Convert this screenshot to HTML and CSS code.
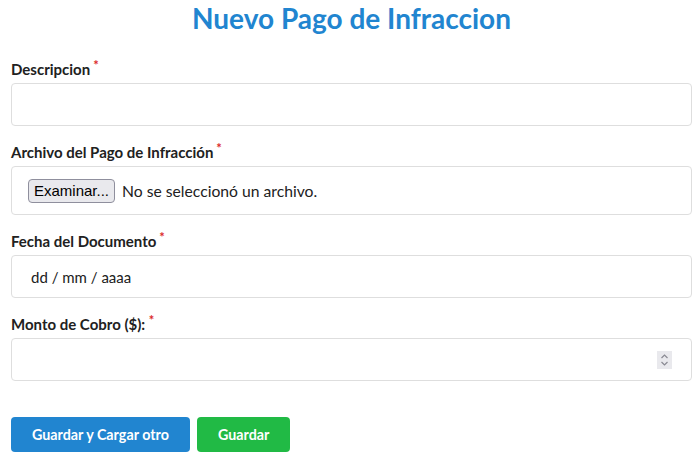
FILE: index.html
```html
<!DOCTYPE html>
<html lang="es">
<head>
<meta charset="utf-8">
<title>Nuevo Pago de Infraccion</title>
<link rel="stylesheet" href="styles.css">
</head>
<body>
<div class="page">
  <h1 class="title">Nuevo Pago de Infraccion</h1>
  <form class="form">
    <div class="field">
      <label class="label">Descripcion<span class="req">*</span></label>
      <input class="control" type="text">
    </div>
    <div class="field">
      <label class="label">Archivo del Pago de Infracción<span class="req">*</span></label>
      <div class="control file-control">
        <span class="file-btn">Examinar...</span>
        <span class="file-text">No se seleccionó un archivo.</span>
      </div>
    </div>
    <div class="field">
      <label class="label">Fecha del Documento<span class="req">*</span></label>
      <div class="control date-control">dd / mm / aaaa</div>
    </div>
    <div class="field">
      <label class="label">Monto de Cobro ($): <span class="req req-tight">*</span></label>
      <div class="control number-control">
        <input class="number-input" type="text">
        <span class="spinner">
          <svg width="15" height="18" viewBox="0 0 15 18"><path d="M4.5 7 L7.5 4 L10.5 7" fill="none" stroke="#8a8a93" stroke-width="1.2"/><path d="M4.5 11 L7.5 14 L10.5 11" fill="none" stroke="#8a8a93" stroke-width="1.2"/></svg>
        </span>
      </div>
    </div>
    <div class="actions">
      <button type="button" class="btn btn-blue">Guardar y Cargar otro</button>
      <button type="button" class="btn btn-green">Guardar</button>
    </div>
  </form>
</div>
</body>
</html>
```
FILE: styles.css
```css
* { box-sizing: border-box; }
html, body { margin: 0; background: #fff; }
body {
  font-family: Lato, "Noto Sans", sans-serif;
  color: rgba(0,0,0,.87);
}
.page {
  padding: 0 8px 0 11px;
}
.title {
  margin: 1px 0 0;
  font-size: 28px;
  line-height: 34px;
  font-weight: 700;
  color: #2185d0;
  text-align: center;
}
.form {
  margin-top: 25px;
}
.field {
  margin-bottom: 17px;
}
.label {
  display: block;
  font-size: 15px;
  line-height: 18px;
  font-weight: 700;
  color: #212121;
  margin-bottom: 5px;
}
.req {
  color: #db2828;
  font-size: 13px;
  vertical-align: top;
  position: relative;
  top: -4px;
  margin-left: 3px;
}
.req-tight {
  margin-left: 0;
}
.control {
  display: block;
  width: 100%;
  height: 43px;
  border: 1px solid #dedede;
  border-radius: 4px;
  background: #fff;
  font-family: Lato, sans-serif;
  font-size: 16px;
  padding: 0 16px;
  outline: none;
}
.file-control {
  height: 49px;
  display: flex;
  align-items: center;
  gap: 7px;
}
.file-btn {
  display: inline-flex;
  align-items: center;
  height: 24px;
  padding: 0 5px;
  background: #e9e9ed;
  border: 1px solid #8f8f9d;
  border-radius: 4px;
  font-family: "Liberation Sans", Arial, sans-serif;
  font-size: 15px;
  color: #000;
}
.file-text {
  font-size: 15.7px;
  color: #212121;
}
.date-control {
  display: flex;
  align-items: center;
  padding-left: 19px;
  font-size: 15px;
  color: #212121;
}
.number-control {
  display: flex;
  align-items: center;
  padding-right: 19px;
}
.number-input {
  flex: 1;
  border: 0;
  outline: none;
  font: inherit;
  background: transparent;
  min-width: 0;
}
.spinner {
  display: flex;
  width: 15px;
  height: 18px;
  background: #e9e9ed;
}
.actions {
  display: flex;
  gap: 7px;
  margin-top: 36px;
}
.btn {
  height: 35px;
  padding: 0 21px;
  border: 0;
  border-radius: 4px;
  font-family: Lato, sans-serif;
  font-size: 14.3px;
  font-weight: 700;
  color: #fff;
  cursor: pointer;
}
.btn-blue { background: #2185d0; }
.btn-green { background: #21ba45; }
```
